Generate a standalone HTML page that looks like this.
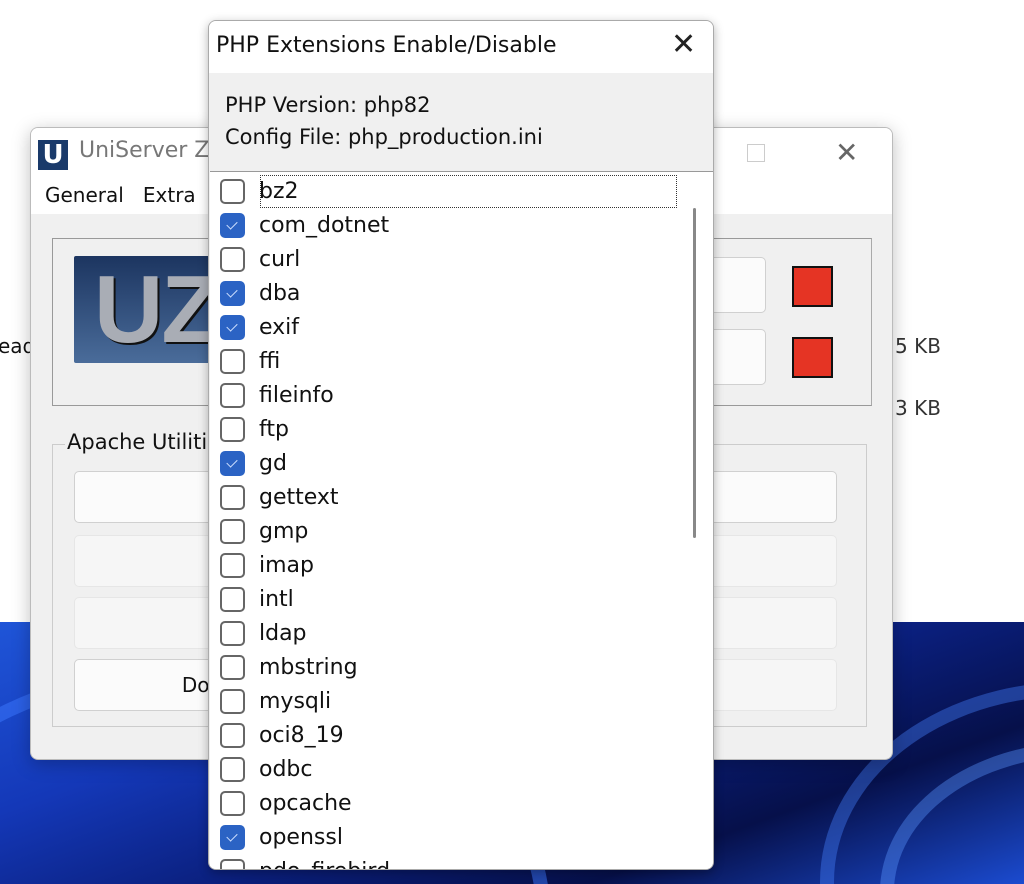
<!DOCTYPE html>
<html><head><meta charset="utf-8"><style>
*{box-sizing:border-box;margin:0;padding:0}
html,body{width:1024px;height:884px;overflow:hidden}
body{position:relative;background:#fff;font-family:"DejaVu Sans","Liberation Sans",sans-serif;color:#111}
.abs{position:absolute}
#wall{left:0;top:622px;width:1024px;height:262px;overflow:hidden;background:
radial-gradient(ellipse 260px 200px at 1000px 860px,#020a3a 0%,rgba(2,10,58,0) 100%),
linear-gradient(160deg,#1f55d8 0%,#1438b8 30%,#0a1e7a 55%,#06104a 75%,#1b4bd0 100%)}
.swirl{border-radius:50%;border:14px solid rgba(80,140,255,.35)}
#back{left:30px;top:127px;width:863px;height:633px;background:#f0f0f0;border:1px solid #bbb;border-radius:8px;overflow:hidden;box-shadow:0 4px 18px rgba(0,0,0,.25)}
#back .tb{height:43px;background:#fff}
#back .mn{height:43px;background:#fff;font-size:20px;padding:12px 0 0 14px}
.btn{position:absolute;border:1px solid #d0d0d0;border-radius:5px;background:#fbfbfb;font-size:20px;text-align:center;line-height:50px;height:52px}
.dis{color:#9a9a9a;border-color:#e6e6e6;background:#f6f6f6}
#dlg{left:208px;top:20px;width:506px;height:850px;background:#f0f0f0;border:1px solid #aaa;border-radius:8px;overflow:hidden;box-shadow:0 3px 10px rgba(0,0,0,.3)}
#dlg .tb{height:52px;background:#fff;font-size:22px;padding:12px 0 0 7px}
.lst{position:absolute;left:1px;top:150px;width:503px;height:700px;background:#fff;border-top:1px solid #999}
.row{position:absolute;left:0;height:34px;width:470px}
.cb{position:absolute;left:10px;top:5px;width:25px;height:25px;border:2px solid #666;border-radius:5px;background:#fff}
.cb.on{background:#2b63c4;border-color:#2b63c4}
.cb.on:after{content:"";position:absolute;left:7px;top:4px;width:5px;height:9px;border:solid #cfe0ff;border-width:0 1.5px 1.5px 0;transform:rotate(45deg)}
.lb{position:absolute;left:49px;top:1px;font-size:22px;line-height:34px}
</style></head><body>
<div id="wall" class="abs">
<div class="abs swirl" style="left:-150px;top:40px;width:700px;height:500px;border-color:rgba(60,120,255,.5)"></div>
<div class="abs swirl" style="left:820px;top:60px;width:500px;height:400px;border-color:rgba(70,130,255,.4)"></div>
<div class="abs swirl" style="left:880px;top:120px;width:400px;height:300px;border-color:rgba(90,150,255,.4)"></div>
</div>
<div class="abs" style="left:-2px;top:334px;font-size:20px">ead</div>
<div class="abs" style="left:895px;top:334px;font-size:20px;color:#333">5 KB</div>
<div class="abs" style="left:895px;top:396px;font-size:20px;color:#333">3 KB</div>

<div id="back" class="abs">
<div class="tb"><div class="abs" style="left:7px;top:12px;width:30px;height:30px;background:#1a3a6a;color:#fff;font-weight:bold;font-size:26px;text-align:center;line-height:30px">U</div>
<div class="abs" style="left:48px;top:10px;font-size:22px;color:#777">UniServer Z</div>
<div class="abs" style="left:716px;top:16px;width:18px;height:18px;border:1px solid #ccc"></div>
<div class="abs" style="left:804px;top:8px;font-size:28px;color:#666">✕</div></div>
<div class="mn">General &nbsp;&nbsp;Extra</div>
<div class="abs" style="left:21px;top:110px;width:820px;height:168px;border:1px solid #999;border-right-color:#aaa"></div>
<div class="abs" style="left:43px;top:128px;width:140px;height:107px;background:linear-gradient(#1c3560,#4a6c9a);border-radius:2px;color:#a9adb5;font:bold 96px/107px 'Liberation Sans',sans-serif;padding-left:20px;letter-spacing:-2px;text-shadow:2px 2px 0 #111">UZ</div>
<div class="btn" style="left:560px;top:129px;width:175px;height:56px"></div>
<div class="btn" style="left:560px;top:201px;width:175px;height:56px"></div>
<div class="abs" style="left:761px;top:138px;width:41px;height:41px;background:#e53424;border:2px solid #111"></div>
<div class="abs" style="left:761px;top:209px;width:41px;height:41px;background:#e53424;border:2px solid #111"></div>
<div class="abs" style="left:21px;top:316px;width:815px;height:283px;border:1px solid #ccc"></div>
<div class="abs" style="left:34px;top:302px;font-size:21px;background:#f0f0f0;padding:0 2px">Apache Utilities</div>
<div class="btn" style="left:43px;top:343px;width:370px">Server</div>
<div class="btn dis" style="left:43px;top:407px;width:370px">View</div>
<div class="btn dis" style="left:43px;top:469px;width:370px">View</div>
<div class="btn" style="left:43px;top:531px;width:370px">Documentation</div>
<div class="btn" style="left:425px;top:343px;width:381px;color:#999">Console</div>
<div class="btn dis" style="left:425px;top:407px;width:381px">phpMyAdmin</div>
<div class="btn dis" style="left:425px;top:469px;width:381px"></div>
<div class="btn dis" style="left:425px;top:531px;width:381px"></div>
</div>

<div id="dlg" class="abs">
<div class="tb">PHP Extensions Enable/Disable<div class="abs" style="left:462px;top:6px;font-size:30px;color:#222">✕</div></div>
<div class="abs" style="left:16px;top:68px;font-size:21px;line-height:32px">PHP Version: php82<br>Config File: php_production.ini</div>
<div class="lst">
<div class="abs" style="left:50px;top:3px;width:417px;height:33px;border:1px dotted #333"></div>
<div class="row" style="top:2px"><div class="cb"></div><div class="lb">bz2</div></div>
<div class="row" style="top:36px"><div class="cb on"></div><div class="lb">com_dotnet</div></div>
<div class="row" style="top:70px"><div class="cb"></div><div class="lb">curl</div></div>
<div class="row" style="top:104px"><div class="cb on"></div><div class="lb">dba</div></div>
<div class="row" style="top:138px"><div class="cb on"></div><div class="lb">exif</div></div>
<div class="row" style="top:172px"><div class="cb"></div><div class="lb">ffi</div></div>
<div class="row" style="top:206px"><div class="cb"></div><div class="lb">fileinfo</div></div>
<div class="row" style="top:240px"><div class="cb"></div><div class="lb">ftp</div></div>
<div class="row" style="top:274px"><div class="cb on"></div><div class="lb">gd</div></div>
<div class="row" style="top:308px"><div class="cb"></div><div class="lb">gettext</div></div>
<div class="row" style="top:342px"><div class="cb"></div><div class="lb">gmp</div></div>
<div class="row" style="top:376px"><div class="cb"></div><div class="lb">imap</div></div>
<div class="row" style="top:410px"><div class="cb"></div><div class="lb">intl</div></div>
<div class="row" style="top:444px"><div class="cb"></div><div class="lb">ldap</div></div>
<div class="row" style="top:478px"><div class="cb"></div><div class="lb">mbstring</div></div>
<div class="row" style="top:512px"><div class="cb"></div><div class="lb">mysqli</div></div>
<div class="row" style="top:546px"><div class="cb"></div><div class="lb">oci8_19</div></div>
<div class="row" style="top:580px"><div class="cb"></div><div class="lb">odbc</div></div>
<div class="row" style="top:614px"><div class="cb"></div><div class="lb">opcache</div></div>
<div class="row" style="top:648px"><div class="cb on"></div><div class="lb">openssl</div></div>
<div class="row" style="top:682px"><div class="cb"></div><div class="lb">pdo_firebird</div></div>
<div class="abs" style="left:483px;top:36px;width:3px;height:330px;background:#888;border-radius:2px"></div>
</div>
</div>
</body></html>
